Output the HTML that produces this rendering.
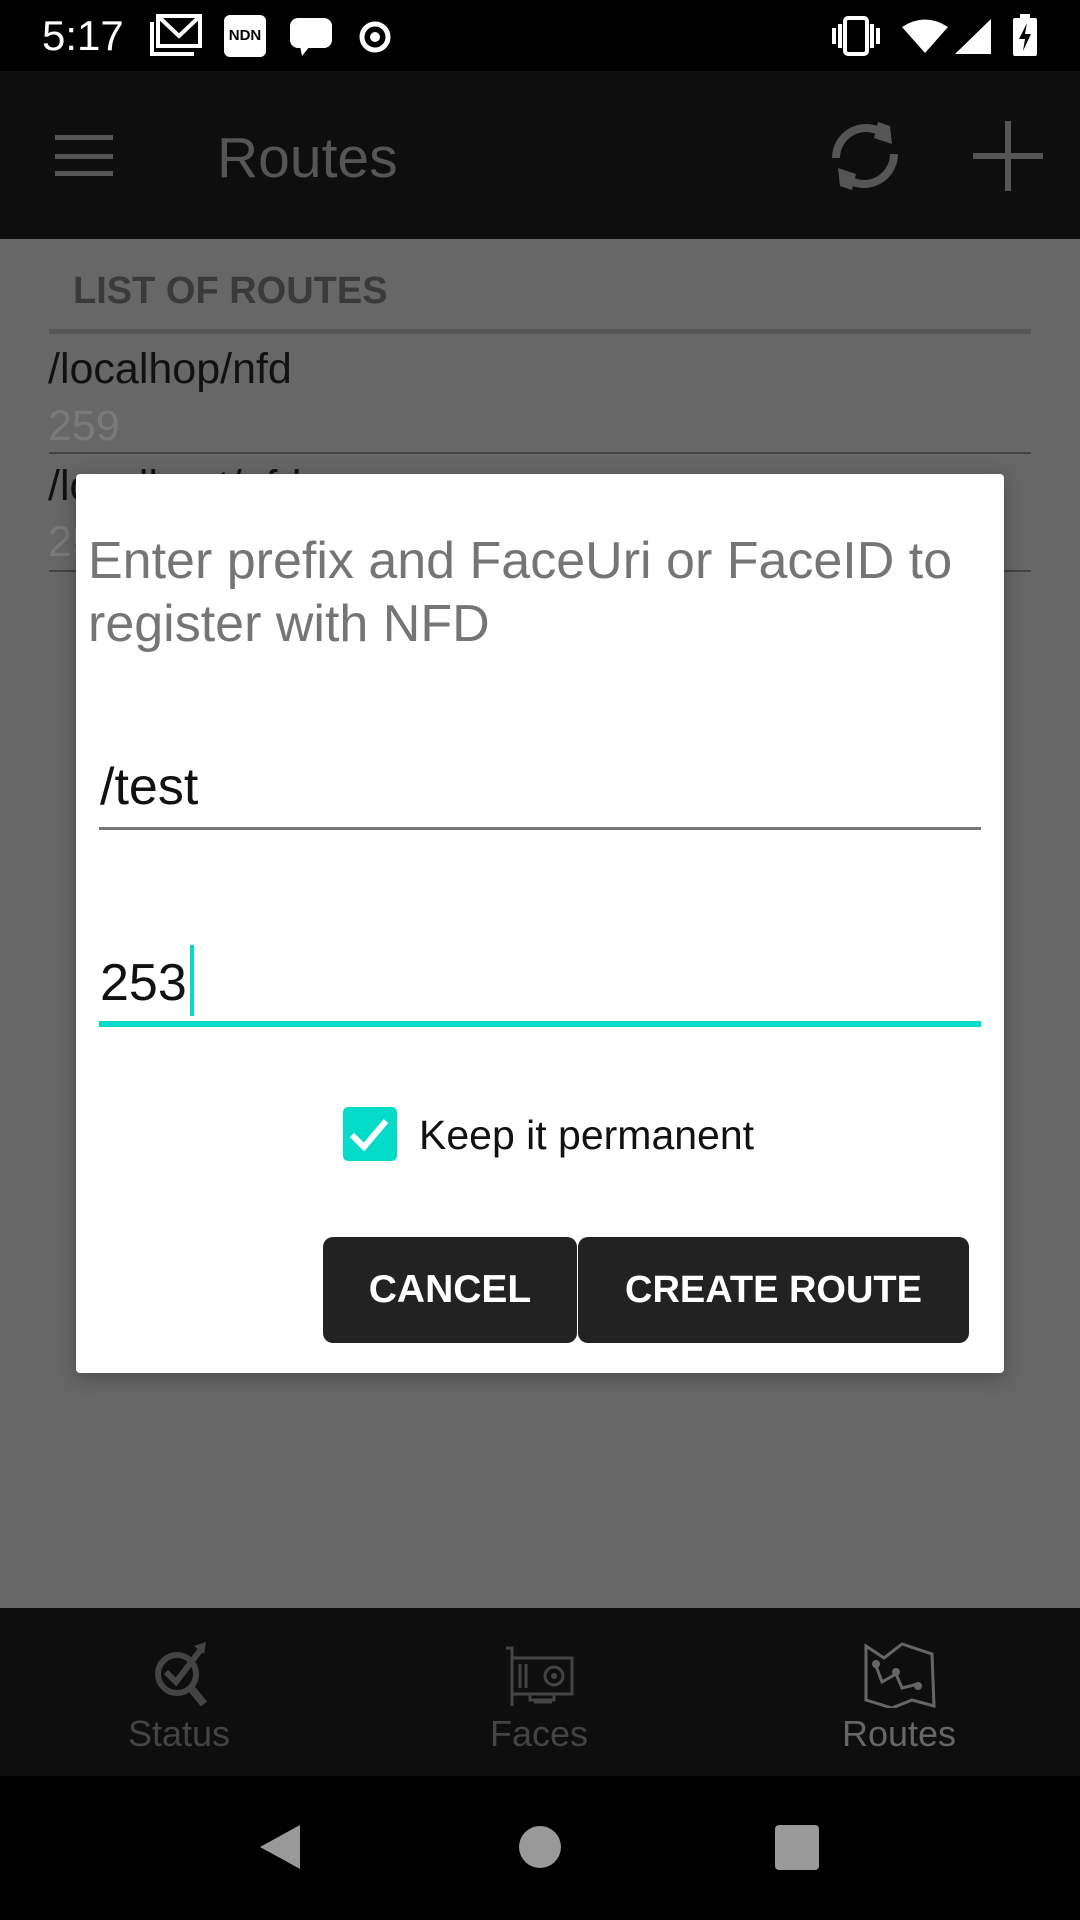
<!DOCTYPE html>
<html><head><meta charset="utf-8"><style>
*{margin:0;padding:0;box-sizing:border-box}
body{width:1080px;height:1920px;position:relative;overflow:hidden;background:#676767;font-family:"Liberation Sans",sans-serif}
.a{position:absolute}
</style></head><body>
<!-- status bar -->
<div class="a" style="left:0;top:0;width:1080px;height:71px;background:#000"></div>
<div class="a" style="left:42px;top:12px;color:#fff;font-size:42px;line-height:48px">5:17</div>
<svg class="a" style="left:150px;top:14px" width="60" height="42" viewBox="0 0 60 42"><rect x="8" y="2" width="42" height="30" fill="none" stroke="#fff" stroke-width="4"/><path d="M10 4 L29 22 L48 4" fill="none" stroke="#fff" stroke-width="4"/><path d="M2 8 V40 H44" fill="none" stroke="#fff" stroke-width="4"/></svg>
<div class="a" style="left:224px;top:15px;width:42px;height:42px;background:#fff;border-radius:6px;color:#000;font-size:15px;font-weight:bold;line-height:42px;text-align:center">NDN</div>
<svg class="a" style="left:290px;top:18px" width="42" height="38" viewBox="0 0 42 38"><rect x="0" y="0" width="42" height="30" rx="8" fill="#fff"/><path d="M10 28 L12 38 L20 28Z" fill="#fff"/></svg>
<svg class="a" style="left:358px;top:20px" width="34" height="34"><circle cx="17" cy="17" r="13" fill="none" stroke="#fff" stroke-width="5"/><circle cx="17" cy="17" r="5" fill="#fff"/></svg>
<svg class="a" style="left:830px;top:15px" width="52" height="42"><rect x="15" y="3" width="22" height="36" rx="3" fill="none" stroke="#fff" stroke-width="4"/><rect x="2" y="13" width="4" height="16" fill="#fff"/><rect x="8" y="9" width="4" height="24" fill="#fff"/><rect x="40" y="9" width="4" height="24" fill="#fff"/><rect x="46" y="13" width="4" height="16" fill="#fff"/></svg>
<svg class="a" style="left:900px;top:16px" width="50" height="40"><path d="M2 11 Q25 -4 48 11 L25 37Z" fill="#fff"/></svg>
<svg class="a" style="left:955px;top:19px" width="38" height="36"><path d="M36 0 V35 H0Z" fill="#fff"/></svg>
<svg class="a" style="left:1013px;top:14px" width="24" height="42"><rect x="7" y="0" width="10" height="5" fill="#fff"/><rect x="0" y="4" width="24" height="38" rx="2" fill="#fff"/><path d="M14 9 L6 25 H12 L10 37 L18 20 H12Z" fill="#000"/></svg>
<!-- app bar -->
<div class="a" style="left:0;top:71px;width:1080px;height:168px;background:#0e0e0e"></div>
<div class="a" style="left:55px;top:135px;width:58px;height:5px;background:#555"></div>
<div class="a" style="left:55px;top:154px;width:58px;height:5px;background:#555"></div>
<div class="a" style="left:55px;top:171px;width:58px;height:5px;background:#555"></div>
<div class="a" style="left:217px;top:126px;color:#555;font-size:57px;line-height:64px">Routes</div>
<svg class="a" style="left:828px;top:118px" width="76" height="76" viewBox="0 0 76 76"><path d="M8 40 A30 30 0 0 1 56 16" fill="none" stroke="#555" stroke-width="8"/><path d="M50 4 L62 8 L64 26 L46 20Z" fill="#555"/><path d="M66 36 A30 30 0 0 1 18 60" fill="none" stroke="#555" stroke-width="8"/><path d="M24 72 L12 68 L10 50 L28 56Z" fill="#555"/></svg>
<div class="a" style="left:973px;top:153px;width:70px;height:6px;background:#555"></div>
<div class="a" style="left:1005px;top:121px;width:6px;height:70px;background:#555"></div>
<!-- list -->
<div class="a" style="left:73px;top:268px;color:#3a3a3a;font-size:38px;font-weight:bold;line-height:46px">LIST OF ROUTES</div>
<div class="a" style="left:49px;top:329px;width:982px;height:5px;background:#555"></div>
<div class="a" style="left:48px;top:345px;color:#111;font-size:43px;line-height:48px">/localhop/nfd</div>
<div class="a" style="left:48px;top:402px;color:#7a7a7a;font-size:43px;line-height:48px">259</div>
<div class="a" style="left:49px;top:452px;width:982px;height:2px;background:#444"></div>
<div class="a" style="left:48px;top:462px;color:#111;font-size:43px;line-height:48px">/localhost/nfd</div>
<div class="a" style="left:48px;top:518px;color:#7a7a7a;font-size:43px;line-height:48px">255</div>
<div class="a" style="left:49px;top:570px;width:982px;height:2px;background:#444"></div>
<!-- dialog -->
<div class="a" style="left:76px;top:474px;width:928px;height:899px;background:#fff;border-radius:4px;box-shadow:0 4px 20px rgba(0,0,0,.3)"></div>
<div class="a" style="left:88px;top:530px;width:910px;color:#757575;font-size:52px;line-height:63px">Enter prefix and FaceUri or FaceID to register with NFD</div>
<div class="a" style="left:100px;top:758px;color:#111;font-size:52px;line-height:58px">/test</div>
<div class="a" style="left:99px;top:827px;width:882px;height:3px;background:#777"></div>
<div class="a" style="left:100px;top:954px;color:#111;font-size:52px;line-height:58px">253</div>
<div class="a" style="left:190px;top:945px;width:4px;height:71px;background:#04dbc8"></div>
<div class="a" style="left:99px;top:1021px;width:882px;height:6px;background:#04dbc8"></div>
<div class="a" style="left:343px;top:1107px;width:54px;height:54px;background:#04dbc8;border-radius:5px"></div>
<svg class="a" style="left:343px;top:1107px" width="54" height="54"><path d="M9 28 L21 40 L43 14" fill="none" stroke="#fff" stroke-width="6"/></svg>
<div class="a" style="left:419px;top:1111px;color:#111;font-size:41px;line-height:48px">Keep it permanent</div>
<div class="a" style="left:323px;top:1237px;width:254px;height:106px;background:#222;border-radius:10px;color:#fff;font-size:39px;font-weight:bold;line-height:106px;text-align:center">CANCEL</div>
<div class="a" style="left:578px;top:1237px;width:391px;height:106px;background:#222;border-radius:10px;color:#fff;font-size:38px;font-weight:bold;line-height:106px;text-align:center">CREATE ROUTE</div>
<!-- bottom nav -->
<div class="a" style="left:0;top:1608px;width:1080px;height:168px;background:#0e0e0e"></div>
<svg class="a" style="left:144px;top:1640px" width="70" height="70" viewBox="0 0 70 70"><circle cx="33" cy="34" r="19" fill="none" stroke="#444" stroke-width="6"/><path d="M46 47 L60 64" stroke="#444" stroke-width="8"/><path d="M22 32 L32 42 L58 8" fill="none" stroke="#444" stroke-width="6"/><path d="M50 6 L62 2 L60 14Z" fill="#444"/></svg>
<svg class="a" style="left:502px;top:1646px" width="74" height="62" viewBox="0 0 74 62"><path d="M4 2 H10 V60" fill="none" stroke="#444" stroke-width="3"/><rect x="10" y="12" width="60" height="36" fill="none" stroke="#444" stroke-width="3"/><circle cx="52" cy="30" r="9" fill="none" stroke="#444" stroke-width="3"/><circle cx="52" cy="30" r="3" fill="#444"/><path d="M18 18 V42 M24 18 V42" stroke="#444" stroke-width="3"/><path d="M28 48 V54 H52 V48 M32 56 H50" fill="none" stroke="#444" stroke-width="3"/></svg>
<svg class="a" style="left:862px;top:1642px" width="74" height="66" viewBox="0 0 74 66"><path d="M4 4 L22 16 L40 2 L70 12 L72 64 L50 58 L30 66 L4 58Z" fill="none" stroke="#666" stroke-width="3"/><path d="M14 24 L20 40 L34 32 L40 46 L56 42" fill="none" stroke="#666" stroke-width="3"/><circle cx="14" cy="22" r="4" fill="#666"/><circle cx="34" cy="30" r="4" fill="#666"/><circle cx="56" cy="44" r="4" fill="#666"/></svg>
<div class="a" style="left:79px;top:1712px;width:200px;text-align:center;color:#444;font-size:36px;line-height:44px">Status</div>
<div class="a" style="left:439px;top:1712px;width:200px;text-align:center;color:#444;font-size:36px;line-height:44px">Faces</div>
<div class="a" style="left:799px;top:1712px;width:200px;text-align:center;color:#666;font-size:36px;line-height:44px">Routes</div>
<!-- system nav -->
<div class="a" style="left:0;top:1776px;width:1080px;height:144px;background:#000"></div>
<svg class="a" style="left:258px;top:1823px" width="44" height="48"><path d="M42 2 V46 L2 24Z" fill="#999"/></svg>
<div class="a" style="left:519px;top:1826px;width:42px;height:42px;border-radius:50%;background:#999"></div>
<div class="a" style="left:775px;top:1825px;width:44px;height:45px;border-radius:4px;background:#999"></div>
</body></html>
